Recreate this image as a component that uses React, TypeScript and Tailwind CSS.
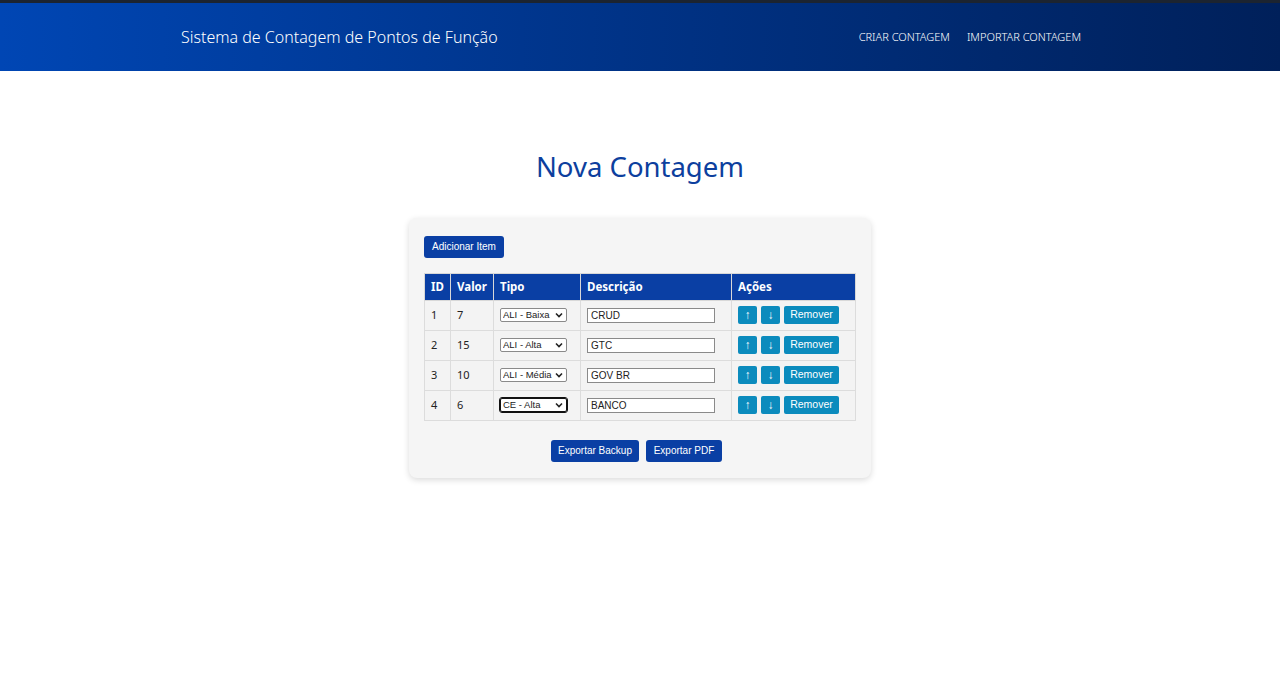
const rows = [
  { id: 1, valor: 7, tipo: "ALI - Baixa", desc: "CRUD" },
  { id: 2, valor: 15, tipo: "ALI - Alta", desc: "GTC" },
  { id: 3, valor: 10, tipo: "ALI - Média", desc: "GOV BR" },
  { id: 4, valor: 6, tipo: "CE - Alta", desc: "BANCO" },
];

const tipos = ["ALI - Baixa", "ALI - Média", "ALI - Alta", "CE - Baixa", "CE - Média", "CE - Alta"];

function Chevron() {
  return (
    <svg
      className="pointer-events-none absolute right-[4px] top-1/2 h-[6px] w-[8px] -translate-y-1/2"
      viewBox="0 0 8 6"
      fill="none"
      stroke="#222"
      strokeWidth="1.6"
    >
      <path d="M1 1.5 L4 4.5 L7 1.5" />
    </svg>
  );
}

export default function App() {
  return (
    <div className="min-h-[678px] bg-white font-['Noto_Sans',sans-serif]">
      <header className="border-t-[3px] border-[#1c2430] bg-gradient-to-r from-[#0046b4] to-[#00205a]">
        <div className="mx-auto flex h-[68px] max-w-[960px] items-center justify-between px-[21px]">
          <h1 className="text-[16px] font-light text-white">Sistema de Contagem de Pontos de Função</h1>
          <nav className="flex gap-[17px] pr-[18px] text-[11px] font-light text-white">
            <a>CRIAR CONTAGEM</a>
            <a>IMPORTAR CONTAGEM</a>
          </nav>
        </div>
      </header>

      <main className="flex flex-col items-center pt-[77px]">
        <h2 className="text-[27.5px] leading-[38px] text-[#0d3f9e]">Nova Contagem</h2>

        <div className="mt-[32px] w-[462px] rounded-lg bg-[#f5f5f5] px-[15px] pb-[16px] pt-[14px] shadow-[0_2px_6px_rgba(0,0,0,0.15)]">
          <button className="h-[22px] rounded-[3px] bg-[#0a3fa4] px-[8px] font-['Liberation_Sans',Arial,sans-serif] text-[10px] text-white">
            Adicionar Item
          </button>

          <table className="mt-[15px] w-[432px] border-collapse text-[11px] text-[#222]">
            <thead>
              <tr className="h-[27px] bg-[#0a3fa4] text-left text-[11.5px] text-white">
                <th className="w-[26px] border border-[#d8d8d8] px-[6px] font-bold">ID</th>
                <th className="w-[43px] border border-[#d8d8d8] px-[6px] font-bold">Valor</th>
                <th className="w-[87px] border border-[#d8d8d8] px-[6px] font-bold">Tipo</th>
                <th className="w-[151px] border border-[#d8d8d8] px-[6px] font-bold">Descrição</th>
                <th className="border border-[#d8d8d8] px-[6px] font-bold">Ações</th>
              </tr>
            </thead>
            <tbody>
              {rows.map((r, i) => (
                <tr key={r.id} className="h-[30px] bg-[#f3f3f3]">
                  <td className="border border-[#dcdcdc] px-[6px]">{r.id}</td>
                  <td className="border border-[#dcdcdc] px-[6px]">{r.valor}</td>
                  <td className="border border-[#dcdcdc] px-[6px]">
                    <div className="relative w-[67px]">
                      <select
                        defaultValue={r.tipo}
                        className={
                          "block h-[14px] w-[67px] appearance-none rounded-[2px] border bg-white pl-[2px] font-['Liberation_Sans',Arial,sans-serif] text-[9.5px] leading-[12px] text-[#222] " +
                          (i === 3 ? "border-[#111] outline outline-1 outline-[#111]" : "border-[#8a8a8a]")
                        }
                      >
                        {tipos.map((t) => (
                          <option key={t}>{t}</option>
                        ))}
                      </select>
                      <Chevron />
                    </div>
                  </td>
                  <td className="border border-[#dcdcdc] px-[6px]">
                    <input
                      defaultValue={r.desc}
                      className="block h-[15px] w-[128px] border border-[#8a8a8a] bg-white px-[3px] font-['Liberation_Sans',Arial,sans-serif] text-[10px] text-[#222]"
                    />
                  </td>
                  <td className="border border-[#dcdcdc] px-[6px]">
                    <div className="flex gap-[4px] font-['Liberation_Sans',Arial,sans-serif] text-white">
                      <button className="h-[18px] w-[19px] rounded-[2px] bg-[#0b8bbd] text-[12px]">↑</button>
                      <button className="h-[18px] w-[19px] rounded-[2px] bg-[#0b8bbd] text-[12px]">↓</button>
                      <button className="h-[18px] w-[55px] rounded-[2px] bg-[#0b8bbd] text-[10.5px]">Remover</button>
                    </div>
                  </td>
                </tr>
              ))}
            </tbody>
          </table>

          <div className="mt-[19px] flex justify-center gap-[7px] pr-[7px] font-['Liberation_Sans',Arial,sans-serif] text-[10px] text-white">
            <button className="h-[22px] w-[88px] rounded-[3px] bg-[#0a3fa4]">Exportar Backup</button>
            <button className="h-[22px] w-[76px] rounded-[3px] bg-[#0a3fa4]">Exportar PDF</button>
          </div>
        </div>
      </main>
    </div>
  );
}
